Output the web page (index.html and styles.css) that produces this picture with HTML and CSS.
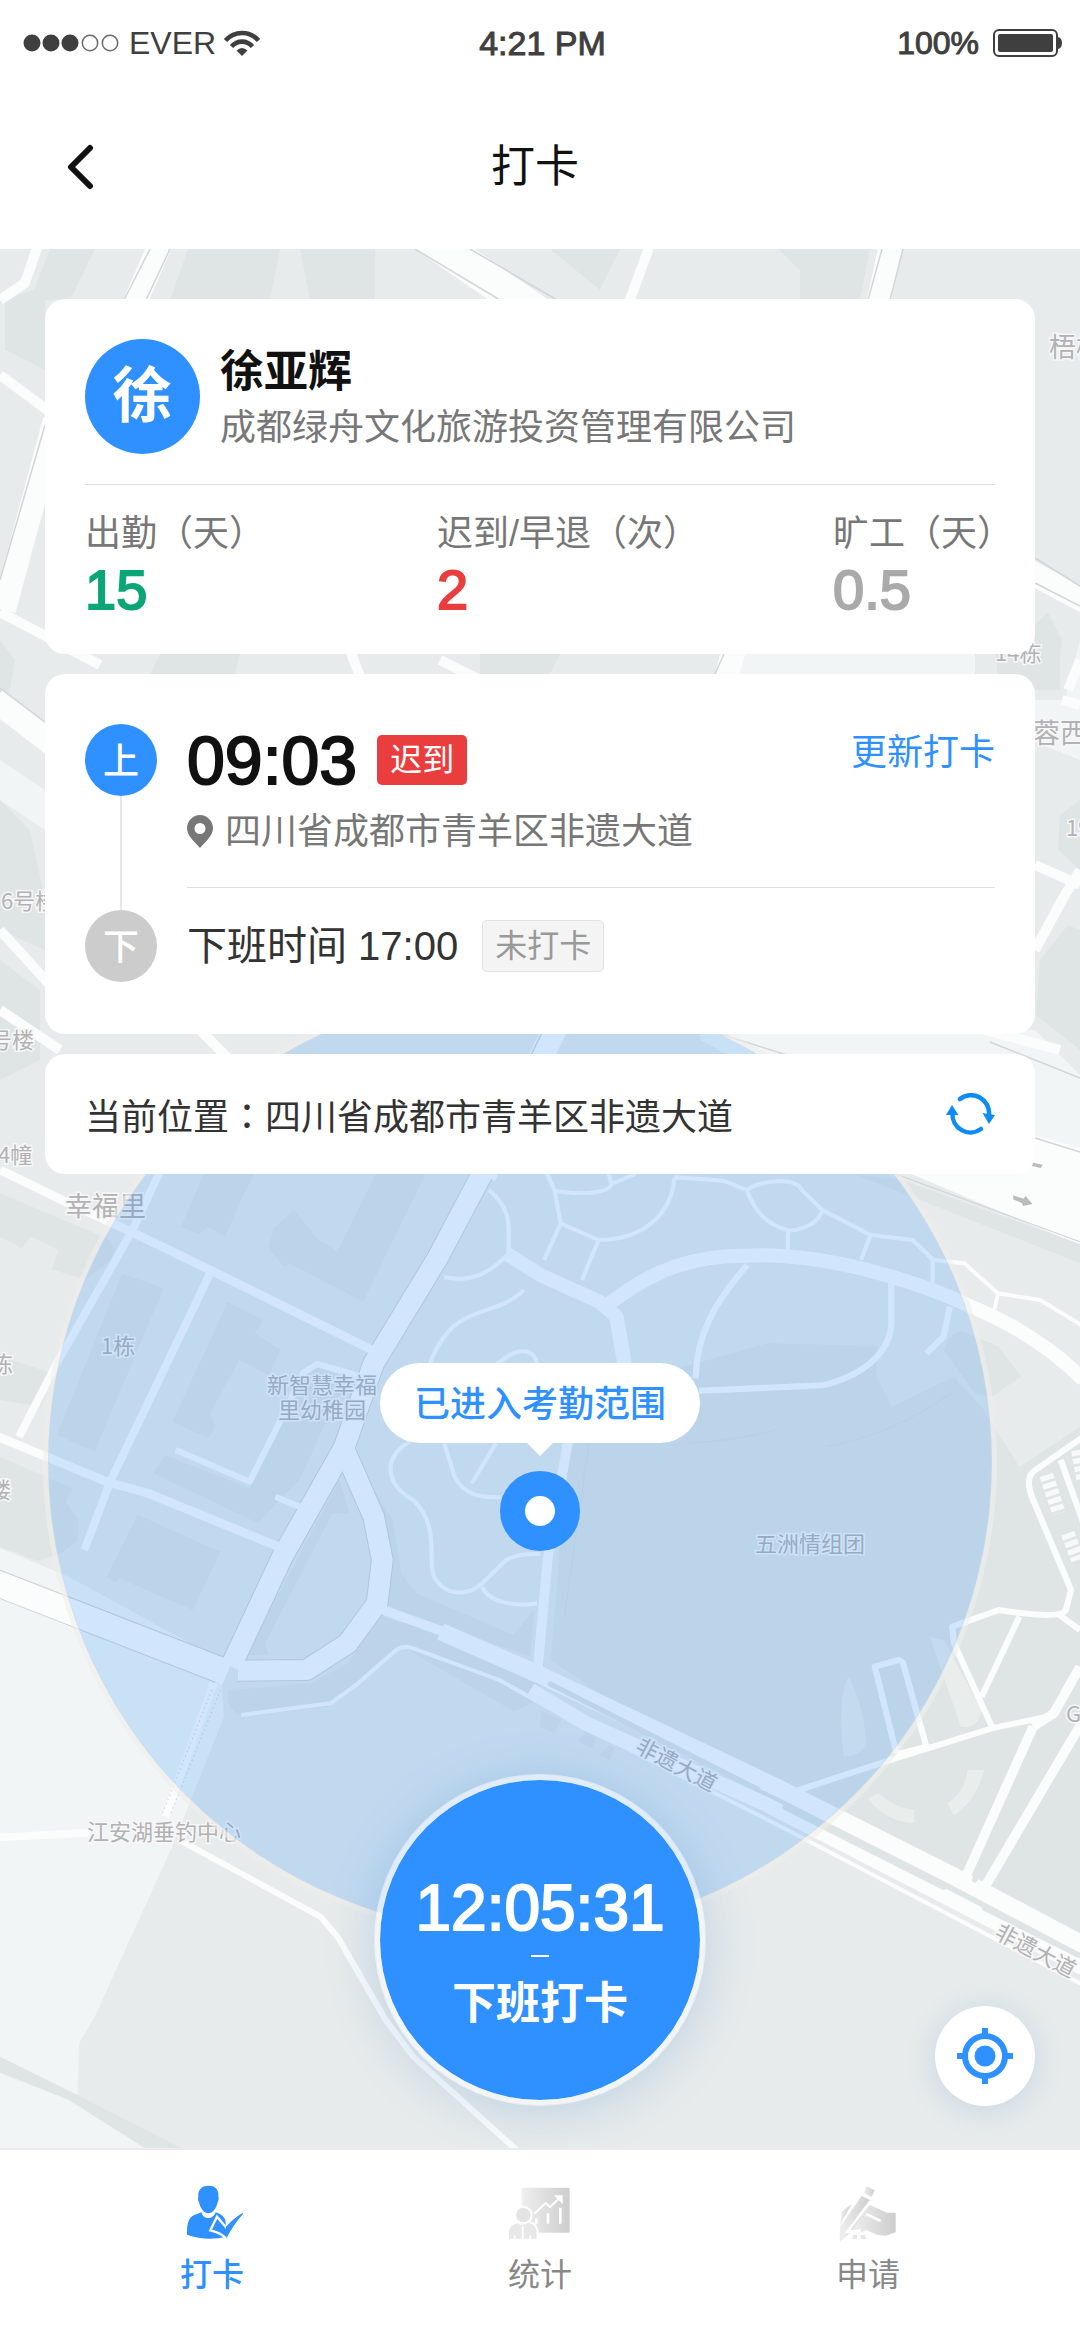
FILE: index.html
```html
<!DOCTYPE html>
<html lang="zh-CN">
<head>
<meta charset="utf-8">
<meta name="viewport" content="width=device-width, initial-scale=1">
<title>打卡</title>
<link rel="stylesheet" href="styles.css">
</head>
<body>
<div class="app">
  <header class="top">
    <div class="status">
      <div class="status-left">
        <svg class="signal" viewBox="0 0 96 18" aria-hidden="true">
          <g fill="#3f3f3f"><circle cx="9" cy="9" r="8.5"/><circle cx="28" cy="9" r="8.5"/><circle cx="47" cy="9" r="8.5"/></g>
          <g fill="none" stroke="#6a6a6a" stroke-width="1.5"><circle cx="67" cy="9" r="7.7"/><circle cx="87" cy="9" r="7.7"/></g>
        </svg>
        <span class="carrier">EVER</span>
        <svg class="wifi" viewBox="0 0 36 26" aria-hidden="true">
          <g fill="none" stroke="#3f3f3f" stroke-width="4.6"><path d="M1.5 10.5C10.500 0.500 25.500 0.500 34.500 10.500"/><path d="M7.500 16.500C13.500 10 22.500 10 28.500 16.500"/></g>
          <path d="M12.500 20.500Q18 15.500 23.500 20.500L18 26z" fill="#3f3f3f"/>
        </svg>
      </div>
      <span class="clock">4:21 PM</span>
      <div class="status-right">
        <span class="medium">100%</span>
        <svg class="battery" viewBox="0 0 69 28" aria-hidden="true">
          <rect x="1" y="1" width="63" height="26" rx="5" fill="none" stroke="#3f3f3f" stroke-width="2"/>
          <rect x="5" y="5" width="55" height="18" rx="2" fill="#3f3f3f"/>
          <path d="M65 8q4 1 4 6t-4 6z" fill="#3f3f3f"/>
        </svg>
      </div>
    </div>
    <div class="nav">
      <button class="back" type="button" aria-label="返回">
        <svg viewBox="0 0 28 46" aria-hidden="true"><path d="M24 4L5 23L24 42" fill="none" stroke="#111" stroke-width="6" stroke-linecap="round" stroke-linejoin="round"/></svg>
      </button>
      <h1>打卡</h1>
    </div>
  </header>

  <main class="stage">
    <svg class="map" viewBox="0 249 1080 1899" preserveAspectRatio="xMidYMid slice" aria-hidden="true">
      <rect y="249" width="1080" height="1899" fill="#e7ebeb"/>
      <!-- northern blocks -->
      <g fill="#dfe5e5">
        <path d="M5 300L45 285V370L5 350zM50 249H95L70 300H30zM188 249H280L270 300H170zM300 249H375V300H310zM550 249H620L600 290zM778 249H870L860 300H800V270z"/>
        <path d="M0 640L15 660L10 690L0 700zM0 800L30 830L45 900V950L0 930zM0 960L40 990V1060L0 1080zM160 654H240L235 674H150zM480 654H560L550 674H480z"/>
        <path d="M1035 625L1048 612L1062 640L1055 690L1035 680zM1060 815L1080 800V870L1058 850zM1036 1015L1040 960L1068 925L1080 930V1050zM995 654H1060V690H1000z"/>
      </g>
      <path d="M742 640H975V700H730zM980 720L1080 760V640L1065 700L1030 700zM0 760L45 790V830L0 800z" fill="#f1f5f5"/>
      <path d="M700 1030H1035L1080 1075V1240L700 1040z" fill="#f1f5f5"/>
      <path d="M890 1095L1080 1148V1245L890 1165z" fill="#fbfcfc"/>
      <g fill="none" stroke="#fbfcfc" stroke-linejoin="round">
        <path stroke-width="34" d="M420 232L545 318"/>
        <path stroke-width="24" d="M162 240L134 305M892 240L878 305M55 420L4 610M735 645L705 760M1030 572L1090 604M-5 700L60 750M564 1010L484 1176"/>
        <path stroke-width="10" d="M650 245L628 305M38 245L25 283L0 300M0 375L50 412M0 612L100 665M350 650L365 690M440 660L500 690M1035 865L1080 885M1035 950L1062 900L1080 870M1062 700L1080 705M1068 690L1080 660M0 1010L60 1050M985 1030L1060 1050M0 930L50 985M190 1020L230 1060"/>
      </g>
      <g fill="none" stroke="#d2d6d6" stroke-width="1.500">
        <path d="M150 249L124 300M170 249L146 300M415 249L500 300M470 249L557 300M882 249L868 300M903 249L890 300M45 425L0 580M1035 558L1080 586M1035 583L1080 606M990 1042L1080 1078M724 654L715 674M0 688L45 722M720 1034L790 1056M1035 1138L1080 1152M553 1010L473 1174"/>
      </g>

      <!-- southern blocks, drawn on a grid of roughly a third of a unit -->
      <g transform="translate(0 1160) scale(.34439 .33333)">
        <path fill="#f1f5f6" d="M0 1165L200 1250L640 1500L650 1670L500 2060L275 2570L230 2650L225 2805L420 2964H0z"/>
        <path fill="#dfe5e5" d="M0 2690L225 2805L525 2964H420L200 2820L0 2738z"/>
        <g fill="#dfe5e5">
          <path d="M0 100L310 235L335 270L320 300L250 360L150 328L170 270L90 230L62 265L0 230z"/>
          <path d="M355 340L475 385L275 875L165 825z"/>
          <path d="M610 0H760L700 120L655 230L603 200L580 222L525 202z"/>
          <path d="M1110 0H1250L1235 42L1055 425L840 310L825 320L780 265L795 205L855 150L920 235L980 275z"/>
          <path d="M660 425L765 480L740 520L815 570L780 645L695 600L610 760L625 800L605 835L500 785L620 520z"/>
          <path d="M480 885L725 985L830 740L900 610L1010 655L940 800L870 960L830 1000L750 1090L445 940z"/>
          <path d="M0 590L155 640L120 740L0 720zM0 890L210 985L190 1025L228 1080L225 1140L180 1180L110 1203L0 1160z"/>
          <path d="M400 1065L640 1175L560 1350L345 1255L335 1270L310 1250z"/>
          <path d="M1020 870L1060 950L1140 1080L1165 1240L1210 1300L1490 1425L1550 1350L1540 1490L1130 1340L1090 1120z"/>
          <path d="M665 1590L900 1570L1010 1510L1110 1370L1350 1440L1568 1570L1600 1720L1170 1460L950 1640L700 1670Q650 1640 665 1590z"/>
          <path d="M1650 850L1968 625L2228 550L2548 558L2545 650L2590 740L2770 650L2850 740L2960 920L3136 800V2600L1600 1500z"/>
          <path d="M2740 570Q2760 510 2800 515L2900 560L2965 650L2880 710L2830 700z"/>
          <path d="M2480 42L3136 310V252L2620 60z"/>
          <path d="M985 960L1015 1060L965 1060L770 1450L780 1485H715z"/>
        </g>
        <path d="M1640 1580L3136 2430V2964H1500L1400 1700z" fill="#e7ebeb"/>
        <g fill="#dfe5e5"><path d="M1570 1650L1630 1680L1610 1720L1568 1700zM1700 1710L1735 1725L1720 1765L1680 1745zM1770 1755L1785 1765L1770 1800L1740 1785z"/></g>
        <g fill="#e9edec"><path d="M2465 1550Q2510 1640 2515 1750Q2500 1790 2450 1790Q2430 1600 2465 1550zM2550 1900Q2600 1945 2655 1950V1990Q2570 1985 2520 1915zM2810 1830H2858Q2830 1930 2770 1965L2750 1930Q2800 1900 2810 1830zM2700 1430L2740 1440L2850 1650Q2840 1710 2790 1700z"/></g>

        <g fill="none" stroke="#cfd5d6" stroke-linejoin="round">
          <path stroke-width="66" d="M1400 42L1270 295L1085 610L1000 860L820 1190L670 1520"/>
          <path stroke-width="66" d="M1000 870L1085 1070L1110 1200L1095 1330L1010 1450L890 1530L690 1532"/>
          <path stroke-width="82" d="M-20 1265L640 1530"/>
        </g>
        <g fill="none" stroke="#fbfcfc" stroke-linejoin="round">
          <path stroke-width="60" d="M1404 34L1270 295L1085 610L1000 860L820 1190L670 1520"/>
          <path stroke-width="60" d="M1000 870L1085 1070L1110 1200L1095 1330L1010 1450L890 1530L690 1532"/>
          <path stroke-width="76" d="M-20 1265L660 1538"/>
          <path stroke-width="26" d="M0 30L200 130L380 215L600 325L1090 575M-10 828L310 965L430 1000L820 1165"/>
          <path stroke-width="23" d="M480 0L385 210L170 600L55 830M610 340L320 965L245 1170M620 1570L480 1970M0 2032L260 2018"/>
          <path stroke-width="18" d="M510 870L725 965L830 750L880 640L920 612L1050 650M800 1010L870 1040M530 2045L930 2270L980 2330L1120 2580L1200 2690L1500 2970"/>
          <path stroke-width="42" d="M1470 280L1568 345L1740 425L1790 470L1815 620M1770 430C1850 370 1960 285 2168 287C2400 275 2680 370 2820 440C2960 500 3060 570 3146 660"/>
          <path stroke-width="52" d="M1280 1415L1568 1545L2268 1888L2768 2148L3146 2355"/>
          <path stroke-width="44" d="M1540 1590L1700 1690L2218 1930L2748 2212L3146 2425"/>
          <path stroke-width="28" d="M1100 1345L1300 1420M1650 840L1590 1200L1560 1540M3000 1700L2800 2160M3146 1680L2860 2180M3136 1520L3060 1660L3000 1700"/>
          <path stroke-width="18" d="M2170 315C2080 420 2022 520 2020 655M2030 692L2390 676C2530 640 2590 560 2588 480V370M2758 440L2740 530L2690 580"/>
          <path stroke-width="18" d="M3146 830L3000 935Q2975 960 3000 1020L3110 1290L3095 1350Q3080 1380 2900 1350L2765 1400L2770 1450L2880 1700M2960 1370L2850 1610M3080 900L3146 1090M3136 1410L3070 1360M3040 1670L2880 1705L2600 1795L2290 1900M2540 1520L2610 1500Q2625 1505 2625 1520L2690 1760L2615 1780Q2600 1780 2598 1760z"/>
          <path stroke-width="12" d="M1420 90C1500 160 1470 220 1478 280C1430 330 1380 370 1290 352M1520 390C1460 460 1350 440 1290 530Q1250 590 1250 615M1440 615C1500 560 1550 560 1560 615"/>
          <path stroke-width="12" d="M1588 40L1610 90L1628 190L1580 300M1628 190L1738 240C1870 240 1950 160 1958 55M1608 92C1690 105 1770 100 1775 72L1845 42M1775 72L1768 42M1738 240L1690 360M1958 52L2100 62L2168 90C2210 60 2310 50 2328 90L2388 150C2370 210 2290 212 2290 212C2220 190 2190 150 2168 90M2288 212V280M2388 150L2528 225L2650 240L2710 300L2800 310L2898 400L2885 460M2898 400L3020 420L3140 495M2528 225L2500 300M2708 300V370"/>
          <path stroke-width="12" d="M1190 845C1100 900 1130 980 1200 1020C1280 1100 1240 1200 1260 1250C1300 1320 1370 1300 1400 1270L1470 1200Q1500 1180 1568 1182M1290 850L1320 950C1350 1010 1400 1012 1455 1012M1440 850L1370 970M1400 1280C1420 1330 1500 1340 1560 1330M700 1665L960 1630L1040 1570L1150 1470Q1170 1455 1200 1465L1450 1560L1640 1670L2268 2000L3146 2475"/>
        </g>
        <g fill="none" stroke="#dfe5e5" stroke-linecap="round">
          <path stroke-width="16" d="M1598 1572L2200 1888M2280 1942L2740 2182M2860 2245L3130 2385M3070 1690L2830 2160"/>
        </g>
        <g fill="none" stroke="#cdd2d3" stroke-width="3">
          <path d="M615 1590L470 1965M640 1590L494 1965" stroke-dasharray="4 10"/>
          <path d="M2600 42L3136 245"/>
        </g>
        <path d="M2000 850Q2150 840 2250 810M2400 860Q2600 820 2760 700M1710 850L1640 1360" fill="none" stroke="#d8dfdf" stroke-width="3"/>
        <g fill="none" stroke="#f8fafa" stroke-width="40" stroke-dasharray="16 8"><path d="M3038 945L3075 1060M3100 1120L3130 1200M3130 870L3146 960"/></g>
        <g fill="#bcbcbc"><path d="M2942 106L2972 116L2978 108L2998 132L2970 138L2968 130L2942 118zM3000 8L3028 14L3022 24L2996 18z"/></g>
      </g>

      <g class="map-labels">
        <g class="label-lg"><text x="1049" y="357">梧桐</text><text x="1033" y="743">蓉西</text><text x="65" y="1216">幸福里</text></g>
        <text x="995" y="661">14栋</text><text x="1066" y="836">19栋</text>
        <text x="1" y="909">6号楼</text><text x="-10" y="1048">号楼</text><text x="-2" y="1163">4幢</text>
        <text x="101" y="1354">1栋</text><text x="-9" y="1372">栋</text><text x="-11" y="1498">楼</text>
        <text x="267" y="1393">新智慧幸福</text><text x="278" y="1418">里幼稚园</text>
        <text x="755" y="1552">五洲情组团</text><text x="87" y="1840">江安湖垂钓中心</text>
        <text x="1066" y="1722">G5</text>
        <text transform="translate(634 1751) rotate(28)">非遗大道</text>
        <text transform="translate(993 1937) rotate(28)">非遗大道</text>
      </g>
      <circle cx="520" cy="1462" r="474" fill="none" stroke="#f0efea" stroke-opacity=".6" stroke-width="6"/>
      <circle cx="520" cy="1462" r="472" fill="#2e91ff" fill-opacity=".2"/>
    </svg>

    <div class="pin">
      <p class="bubble">已进入考勤范围</p>
      <span class="marker"></span>
    </div>

    <section class="card summary">
      <div class="person">
        <span class="avatar">徐</span>
        <div>
          <h2>徐亚辉</h2>
          <p class="company">成都绿舟文化旅游投资管理有限公司</p>
        </div>
      </div>
      <dl class="stats">
        <div><dt>出勤（天）</dt><dd class="green">15</dd></div>
        <div><dt>迟到/早退（次）</dt><dd class="red">2</dd></div>
        <div><dt>旷工（天）</dt><dd class="gray">0.5</dd></div>
      </dl>
    </section>

    <section class="card shifts">
      <div class="shift shift-on">
        <div class="rail"><span class="dot">上</span></div>
        <div class="shift-body">
          <div class="shift-row">
            <time class="punched">09:03</time>
            <span class="badge late">迟到</span>
            <a class="update" href="#update">更新打卡</a>
          </div>
          <p class="address">
            <svg viewBox="0 0 26 34" aria-hidden="true"><path d="M13 0C20 0 26 6 26 13C26 21 18 27 13 33C8 27 0 21 0 13C0 6 6 0 13 0zM13 8a5.500 5.500 0 1 0 0 11a5.500 5.500 0 1 0 0-11z" fill="#777" fill-rule="evenodd"/></svg>
            四川省成都市青羊区非遗大道
          </p>
        </div>
      </div>
      <div class="shift">
        <span class="dot off">下</span>
        <div class="shift-row off-row">
          <span class="planned">下班时间 17:00</span>
          <span class="badge pending">未打卡</span>
        </div>
      </div>
    </section>

    <section class="card location">
      <p>当前位置<span class="colon" lang="zh-TW">：</span>四川省成都市青羊区非遗大道</p>
      <button class="refresh" type="button" aria-label="刷新位置">
        <svg viewBox="0 0 49 42" aria-hidden="true">
          <g fill="none" stroke="#0f8bf5" stroke-width="4.500" stroke-linecap="round"><path d="M14 6A18 18 0 0 1 43 22"/><path d="M35 36A18 18 0 0 1 6.500 20"/></g>
          <path d="M36.500 20L49 22L43 31zM0 22L6 12L12.500 22z" fill="#0f8bf5"/>
        </svg>
      </button>
    </section>

    <div class="actions">
      <button class="punch" type="button"><span class="punch-time">12:05:31</span><span class="dash"></span><span class="punch-label">下班打卡</span></button>
      <button class="locate" type="button" aria-label="定位">
        <svg viewBox="0 0 56 56" aria-hidden="true"><circle cx="28" cy="28" r="20" fill="none" stroke="#2e91ff" stroke-width="6"/><circle cx="28" cy="28" r="10.500" fill="#2e91ff"/><path d="M28 0V7M28 49V56M0 28H7M49 28H56" stroke="#2e91ff" stroke-width="6"/></svg>
      </button>
    </div>
  </main>

  <nav class="tabs">
    <a class="tab active" href="#punch" aria-current="page">
      <svg viewBox="64 64 186 180" aria-hidden="true">
        <g fill="#2e91ff"><path d="M147 72c22 0 31 14 29 33 2 4 1 12-2 16-3 17-14 34-28 34s-25-17-28-34c-3-4-4-12-2-16-2-19 8-33 31-33z"/><path d="M125 152C130 174 160 176 168 152Q196 160 198 182L200 225Q140 240 82 219Q80 168 104 160z"/></g>
        <path d="M172 165L199 197Q230 162 257 150Q225 182 200 231Q185 214 152 206z" fill="#2e91ff" stroke="#fff" stroke-width="7"/>
        <path d="M199 195Q230 162 257 150Q225 182 200 231z" fill="#2e91ff"/>
      </svg>
      <span>打卡</span>
    </a>
    <a class="tab" href="#stats">
      <svg viewBox="55 64 186 180" aria-hidden="true">
        <defs><linearGradient id="fade" x1="0" x2="1"><stop offset="0" stop-color="#efefef"/><stop offset="1" stop-color="#cdcdcd"/></linearGradient></defs>
        <rect x="93" y="78" width="144" height="135" rx="4" fill="url(#fade)"/>
        <g fill="#fff"><path d="M133 170h8v16h-8zM168 155h8v31h-8zM205 138h8v48h-8zM189 101H216V127z"/></g>
        <path d="M131 156L165 124L178 136L207 109" fill="none" stroke="#fff" stroke-width="6"/>
        <circle cx="98" cy="160" r="25" fill="#e4e4e4" stroke="#fff" stroke-width="6"/>
        <path d="M55 231V212Q57 188 82 185L96 192L112 185Q136 188 138 212V231z" fill="#e8e8e8"/>
        <path d="M118 182Q141 188 141 216" fill="none" stroke="#fff" stroke-width="6"/>
        <path d="M96 192V234M72 220V234M119 220V234" stroke="#fff" stroke-width="5"/>
      </svg>
      <span>统计</span>
    </a>
    <a class="tab" href="#apply">
      <svg viewBox="1039 64 186 180" aria-hidden="true">
        <g fill="url(#fade)"><path d="M1138 130L1190 153H1215V212L1185 222L1160 220L1128 205L1108 213L1080 203L1120 145z"/><path d="M1113 103L1140 116L1085 208L1047 241L1048 195z"/><path d="M1128 74L1152 86L1143 105L1119 94z"/><path d="M1083 127L1053 150L1048 190z"/></g>
        <path d="M1126 157L1170 178M1140 118L1070 210L1110 207" fill="none" stroke="#fff" stroke-width="8"/>
        <path d="M1087 220h12v12h-14zM1110 220h12l5 12h-17z" fill="#e6e6e6"/>
      </svg>
      <span>申请</span>
    </a>
  </nav>
</div>
</body>
</html>
```
FILE: styles.css
```css
* { box-sizing: border-box; margin: 0; padding: 0; }

body {
  background: #fff;
  color: #333;
  font-family: "Liberation Sans", "Noto Sans CJK SC", sans-serif;
  font-size: 36px;
  line-height: 48px;
}

button { border: 0; background: none; font: inherit; cursor: pointer; }
a { color: inherit; text-decoration: none; }
svg { display: block; }

.app { display: flex; flex-direction: column; min-height: 100vh; }

/* Status bar and title */
.status {
  display: grid;
  grid-template-columns: 1fr auto 1fr;
  align-items: center;
  height: 84px;
  padding: 2px 18px 0 23px;
  font-size: 32px;
  color: #3f3f3f;
}
.status-left, .status-right { display: flex; align-items: center; }
.status-right { justify-content: flex-end; gap: 14px; }
.signal { width: 96px; height: 18px; margin-right: 10px; }
.wifi { width: 36px; height: 26px; margin-left: 8px; }
.battery { width: 69px; height: 28px; }
.clock { font-size: 34px; -webkit-text-stroke: 1px currentColor; }
.medium { -webkit-text-stroke: 1px currentColor; }

.nav {
  display: grid;
  grid-template-columns: 1fr auto 1fr;
  align-items: center;
  height: 165px;
  padding: 0 66px 0 56px;
}
.back { justify-self: start; padding: 10px; }
.back svg { width: 28px; height: 46px; }
.nav h1 { font-size: 44px; font-weight: 400; line-height: 66px; color: #111; }

/* Map stage */
.stage {
  position: relative;
  flex: 1;
  display: flex;
  flex-direction: column;
  gap: 20px;
  padding: 50px 45px 42px;
  overflow: hidden;
}
.map { position: absolute; inset: 0; width: 100%; height: 100%; }
.map-labels { font-size: 22px; fill: #b3b1b3; stroke: #f6f8f8; stroke-width: 3px; paint-order: stroke; font-family: "Noto Sans CJK SC", sans-serif; }
.label-lg { font-size: 27px; }

.pin {
  position: absolute;
  top: 1114px;
  left: 50%;
  transform: translateX(-50%);
  display: flex;
  flex-direction: column;
  align-items: center;
  gap: 28px;
}
.bubble {
  position: relative;
  padding: 18px 34px 14px;
  border-radius: 40px;
  background: #fff;
  color: #2e91ff;
  font-weight: 500;
  white-space: nowrap;
}
.bubble::after {
  content: "";
  position: absolute;
  top: 100%;
  left: 50%;
  margin-left: -13px;
  border: 13px solid transparent;
  border-top-color: #fff;
  border-bottom: 0;
}
.marker { width: 80px; height: 80px; border: 25px solid #2e91ff; border-radius: 50%; background: #fff; }

/* Cards */
.card { position: relative; padding: 40px; border-radius: 20px; background: #fff; }

.person {
  display: flex;
  align-items: center;
  gap: 20px;
  padding-bottom: 30px;
  border-bottom: 1px solid #dedede;
}
.avatar {
  display: grid;
  place-items: center;
  width: 115px;
  height: 115px;
  border-radius: 50%;
  background: #2e91ff;
  color: #fff;
  font-size: 60px;
  font-weight: 700;
}
.person h2 { font-size: 44px; font-weight: 700; line-height: 62px; color: #111; }
.company { color: #777; line-height: 50px; }

.summary { padding-bottom: 32px; }
.stats {
  display: grid;
  grid-template-columns: minmax(0, 352fr) minmax(0, 396fr) minmax(0, 162fr);
  padding-top: 25px;
  white-space: nowrap;
}
.stats dt { color: #777; }
.stats dd { font-size: 56px; line-height: 64px; -webkit-text-stroke: 2px currentColor; }
.green { color: #0aa678; }
.red { color: #ea3e3e; }
.gray { color: #aaa; }

.shifts { padding: 50px 40px 52px; }
.shift { display: flex; gap: 30px; }
.rail { display: flex; flex-direction: column; align-items: center; }
.rail::after { content: ""; flex: 1; width: 2px; background: #e8e8e8; }
.dot {
  display: grid;
  place-items: center;
  flex: none;
  width: 72px;
  height: 72px;
  padding-top: 4px;
  border-radius: 50%;
  background: #2e91ff;
  color: #fff;
  font-weight: 500;
}
.dot.off { background: #ccc; }
.shift-on { height: 186px; }
.shift-body { flex: 1; height: 164px; border-bottom: 1px solid #dedede; }
.shift-row { display: flex; align-items: center; height: 72px; }
.punched { font-size: 68px; color: #111; -webkit-text-stroke: 2px currentColor; }
.badge { border-radius: 5px; font-size: 32px; line-height: 50px; padding: 0 13px; }
.late { margin-left: 20px; background: #ea3e3e; color: #fff; }
.update { margin-left: auto; padding-bottom: 14px; color: #2e91ff; }
.address { display: flex; align-items: center; gap: 12px; margin-top: 12px; color: #777; }
.address svg { width: 26px; height: 34px; }
.planned { font-size: 40px; }
.pending { margin-left: 24px; border: 1px solid #e2e2e2; padding: 0 12px; background: #f4f4f4; color: #999; }

.location { display: flex; align-items: center; justify-content: space-between; padding: 32px 40px; }
.location p { padding-top: 8px; line-height: 48px; }
.colon { font-family: "Noto Sans CJK TC", sans-serif; line-height: 1; }
.refresh svg { width: 49px; height: 42px; }

/* Floating actions */
.actions {
  position: relative;
  display: grid;
  grid-template-columns: 1fr auto 1fr;
  align-items: end;
  margin-top: auto;
}
.punch {
  grid-column: 2;
  display: flex;
  flex-direction: column;
  align-items: center;
  width: 332px;
  height: 332px;
  padding-top: 92px;
  border: 6px solid rgba(255, 255, 255, .5);
  border-radius: 50%;
  background: #2e91ff;
  background-clip: padding-box;
  box-shadow: 0 6px 50px rgba(46, 120, 200, .22);
  color: #fff;
}
.punch-time { font-size: 64px; line-height: 72px; -webkit-text-stroke: 2px currentColor; }
.dash { width: 18px; height: 2px; margin: 11px 0 14px; background: #fff; }
.punch-label { font-size: 44px; font-weight: 700; line-height: 66px; }
.locate {
  justify-self: end;
  display: grid;
  place-items: center;
  width: 100px;
  height: 100px;
  border-radius: 50%;
  background: #fff;
  box-shadow: 0 4px 30px rgba(46, 120, 200, .18);
}
.locate svg { width: 56px; height: 56px; }

/* Tab bar */
.tabs {
  display: grid;
  grid-template-columns: repeat(3, 1fr);
  height: 192px;
  padding: 33px 48px 0;
  border-top: 2px solid #ebebeb;
}
.tab { display: flex; flex-direction: column; align-items: center; gap: 8px; color: #888; font-size: 32px; }
.tab svg { width: 62px; height: 60px; }
.tab.active { color: #2e91ff; font-weight: 500; }
```
